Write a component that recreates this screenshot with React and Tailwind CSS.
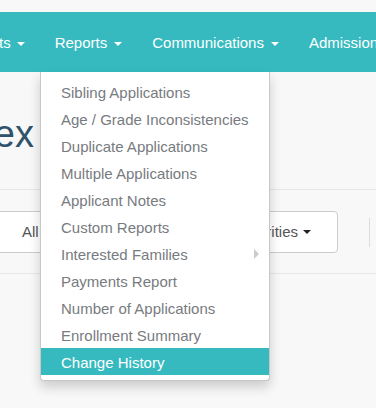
import React from "react";

function Caret({ className = "" }) {
  return (
    <span
      className={
        "inline-block w-0 h-0 border-t-[4px] border-x-[4px] border-x-transparent " +
        className
      }
    />
  );
}

const items = [
  "Sibling Applications",
  "Age / Grade Inconsistencies",
  "Duplicate Applications",
  "Multiple Applications",
  "Applicant Notes",
  "Custom Reports",
  "Interested Families",
  "Payments Report",
  "Number of Applications",
  "Enrollment Summary",
  "Change History",
];

export default function App() {
  return (
    <div
      className="relative w-[376px] h-[408px] overflow-hidden bg-[#f8f8f8]"
      style={{ fontFamily: '"Liberation Sans", Arial, sans-serif' }}
    >
      <div className="h-[12px] bg-[#f8f8f8]" />
      <nav className="h-[60px] bg-[#36babf] flex items-center pt-[3px] text-white text-[15px] whitespace-nowrap">
        <div className="flex items-center pr-[15px] -ml-[1px]">
          <span>ts</span>
          <Caret className="ml-[6px] border-t-white" />
        </div>
        <div className="flex items-center px-[15px]">
          <span>Reports</span>
          <Caret className="ml-[7px] border-t-white" />
        </div>
        <div className="flex items-center px-[15px]">
          <span>Communications</span>
          <Caret className="ml-[7px] border-t-white" />
        </div>
        <div className="flex items-center px-[15px]">
          <span>Admissions</span>
        </div>
      </nav>

      <div className="h-[117px] flex items-start pt-[40px]">
        <h1 className="text-[38px] leading-[44px] text-[#30526b] -ml-[59px] whitespace-nowrap">
          Index
        </h1>
      </div>

      <div className="border-y border-[#e7e7e7] pt-[21px] pb-[20px] flex items-center whitespace-nowrap">
        <div className="-ml-[10px] h-[42px] w-[130px] bg-white border border-[#cccccc] rounded-[4px] flex items-center pl-[31px] text-[15px] text-[#555]">
          All Statuses
        </div>
        <div className="ml-[10px] h-[42px] w-[208px] bg-white border border-[#cccccc] rounded-[4px] flex items-center justify-end pr-[26px] text-[15px] text-[#555]">
          <span>All Priorities</span>
          <Caret className="ml-[5px] border-t-[#222]" />
        </div>
        <div className="ml-[31px] w-px h-[29px] bg-[#dddddd]" />
      </div>

      <div
        className="absolute left-[40px] top-[72px] w-[230px] bg-white border border-t-0 border-[#c8c8c8] rounded-b-[4px] pt-[6px] pb-[5px] shadow-[0_6px_12px_rgba(0,0,0,0.18)] text-[15px]"
      >
        {items.map((t) => {
          const active = t === "Change History";
          return (
            <div
              key={t}
              className={
                "h-[27px] flex items-center justify-between pt-[3px] pl-[20px] pr-[10px] whitespace-nowrap " +
                (active ? "bg-[#36babf] text-white" : "text-[#777b80]")
              }
            >
              <span>{t}</span>
              {t === "Interested Families" && (
                <span className="w-0 h-0 -mt-[3px] border-y-[5px] border-y-transparent border-l-[5px] border-l-[#cccccc]" />
              )}
            </div>
          );
        })}
      </div>
    </div>
  );
}
